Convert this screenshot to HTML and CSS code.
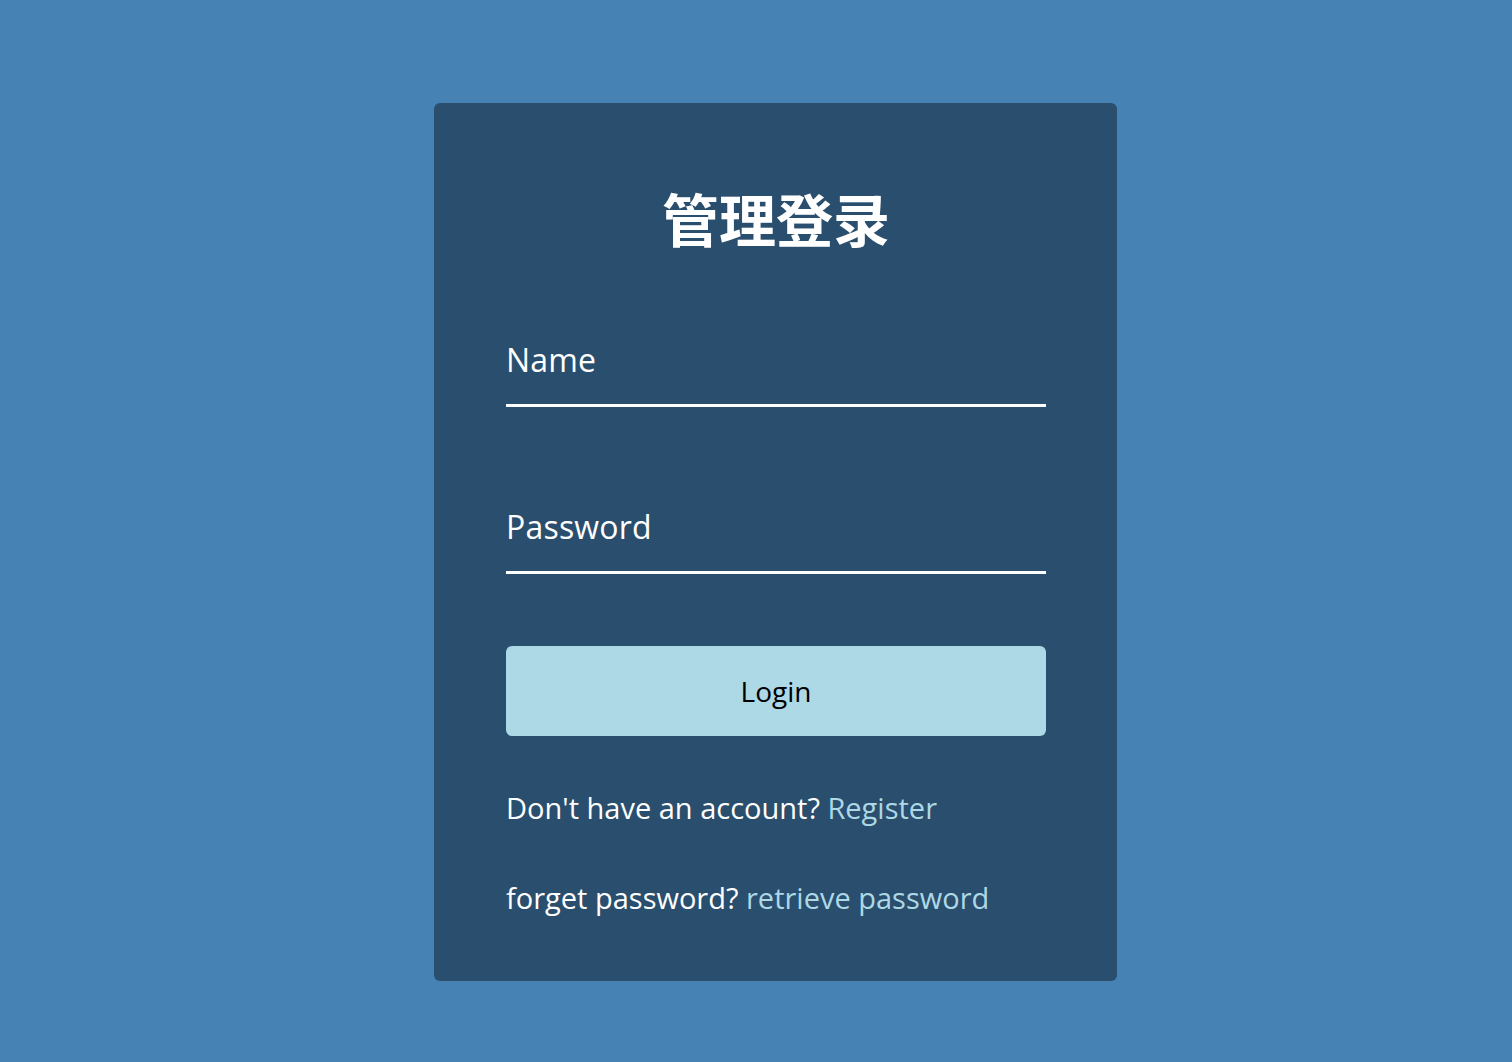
FILE: index.html
```html
<!DOCTYPE html>
<html lang="zh">
<head>
<meta charset="utf-8">
<title>管理登录</title>
<link rel="stylesheet" href="styles.css">
</head>
<body>
<div class="card">
  <h1 class="title">管理登录</h1>
  <div class="field"><span class="placeholder">Name</span></div>
  <div class="field field-second"><span class="placeholder">Password</span></div>
  <button class="login-btn" type="button">Login</button>
  <p class="note note-first">Don't have an account? <a class="link" href="#">Register</a></p>
  <p class="note note-second">forget password? <a class="link" href="#">retrieve password</a></p>
</div>
</body>
</html>
```
FILE: styles.css
```css
html, body {
  margin: 0;
  padding: 0;
  background: #4682b4;
  min-height: 100%;
}
body {
  font-family: "Open Sans", "Noto Sans", "Noto Sans CJK SC", sans-serif;
  color: #ffffff;
  padding-top: 103px;
}
.card {
  box-sizing: border-box;
  width: 683px;
  margin-left: 434px;
  padding: 81px 71px 63px 72px;
  background: #2a4e6d;
  border-radius: 6px;
  display: flex;
  flex-direction: column;
}
.title {
  margin: 0;
  font-family: "Noto Sans CJK SC", sans-serif;
  font-size: 57px;
  line-height: 67px;
  font-weight: 700;
  text-align: center;
}
.field {
  margin-top: 89px;
  padding-bottom: 24px;
  border-bottom: 3px solid #ffffff;
  line-height: 40px;
  height: 40px;
  font-size: 32px;
  letter-spacing: 0.2px;
}
.field-second {
  margin-top: 100px;
}
.placeholder {
  color: #ffffff;
}
.login-btn {
  margin-top: 72px;
  height: 90px;
  border: none;
  border-radius: 6px;
  background: #add8e6;
  color: #000000;
  font-family: "Open Sans", "Noto Sans", sans-serif;
  font-size: 28px;
  cursor: pointer;
}
.note {
  margin: 52px 0 0;
  line-height: 40px;
  font-size: 29px;
}
.note-second {
  margin-top: 50px;
}
.link {
  color: #add8e6;
  text-decoration: none;
}
```
